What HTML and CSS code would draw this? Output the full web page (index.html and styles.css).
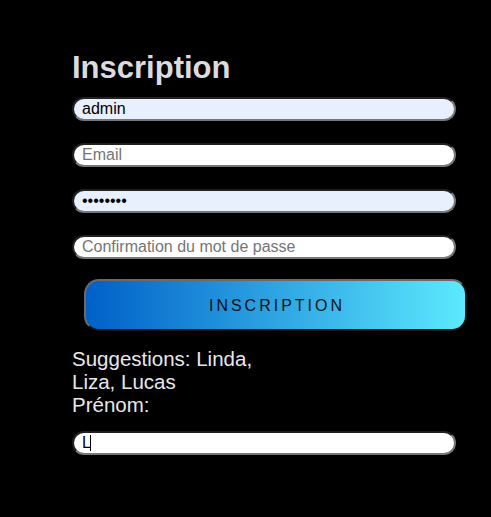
FILE: index.html
```html
<!DOCTYPE html>
<html lang="fr">
<head>
<meta charset="utf-8">
<title>Inscription</title>
<link rel="stylesheet" href="styles.css">
</head>
<body>
<form class="form">
  <h1 class="title">Inscription</h1>
  <input class="field filled" type="text" value="admin">
  <input class="field" type="email" placeholder="Email">
  <input class="field filled" type="password" value="password">
  <input class="field" type="password" placeholder="Confirmation du mot de passe">
  <button class="submit" type="button">INSCRIPTION</button>
  <p class="suggest">Suggestions: Linda, Liza, Lucas<br>Prénom:</p>
  <div class="caret-wrap">
    <input class="field last" type="text" value="L">
    <span class="caret"></span>
  </div>
</form>
</body>
</html>
```

FILE: styles.css
```css
html, body {
  margin: 0;
  background: #000;
}
body {
  font-family: "Liberation Sans", Arial, sans-serif;
}
.form {
  display: flex;
  flex-direction: column;
  align-items: flex-start;
  padding: 50px 0 0 72px;
  width: 384px;
}
.title {
  margin: 0 0 11px;
  font-size: 31px;
  line-height: 36px;
  font-weight: bold;
  color: #dcdcdc;
}
.field {
  display: block;
  box-sizing: border-box;
  width: 384px;
  height: 24px;
  margin: 0 0 22px;
  padding: 0 8px;
  border: 2px inset #767676;
  border-radius: 12px;
  background: #fff;
  color: #000;
  font-family: "Liberation Sans", Arial, sans-serif;
  font-size: 16px;
  outline: none;
}
.field::placeholder {
  color: #757575;
}
.field.filled {
  background: #e8f0fe;
}
.submit {
  box-sizing: border-box;
  width: 383px;
  height: 52px;
  margin: -2px 0 0 12px;
  border: 2px outset #6a6a6a;
  border-radius: 15px;
  background: linear-gradient(90deg, #0060c8 0%, #5ce9fd 100%);
  color: #111;
  font-family: "Liberation Sans", Arial, sans-serif;
  font-size: 16px;
  letter-spacing: 3px;
  padding: 2px 0 0 3px;
}
.suggest {
  width: 200px;
  margin: 16px 0 15px;
  font-size: 20.5px;
  line-height: 23px;
  color: #e8e8e8;
}
.caret-wrap {
  position: relative;
}
.field.last {
  margin: 0;
}
.caret {
  position: absolute;
  left: 18px;
  top: 4px;
  width: 1px;
  height: 16px;
  background: #000;
}
```
